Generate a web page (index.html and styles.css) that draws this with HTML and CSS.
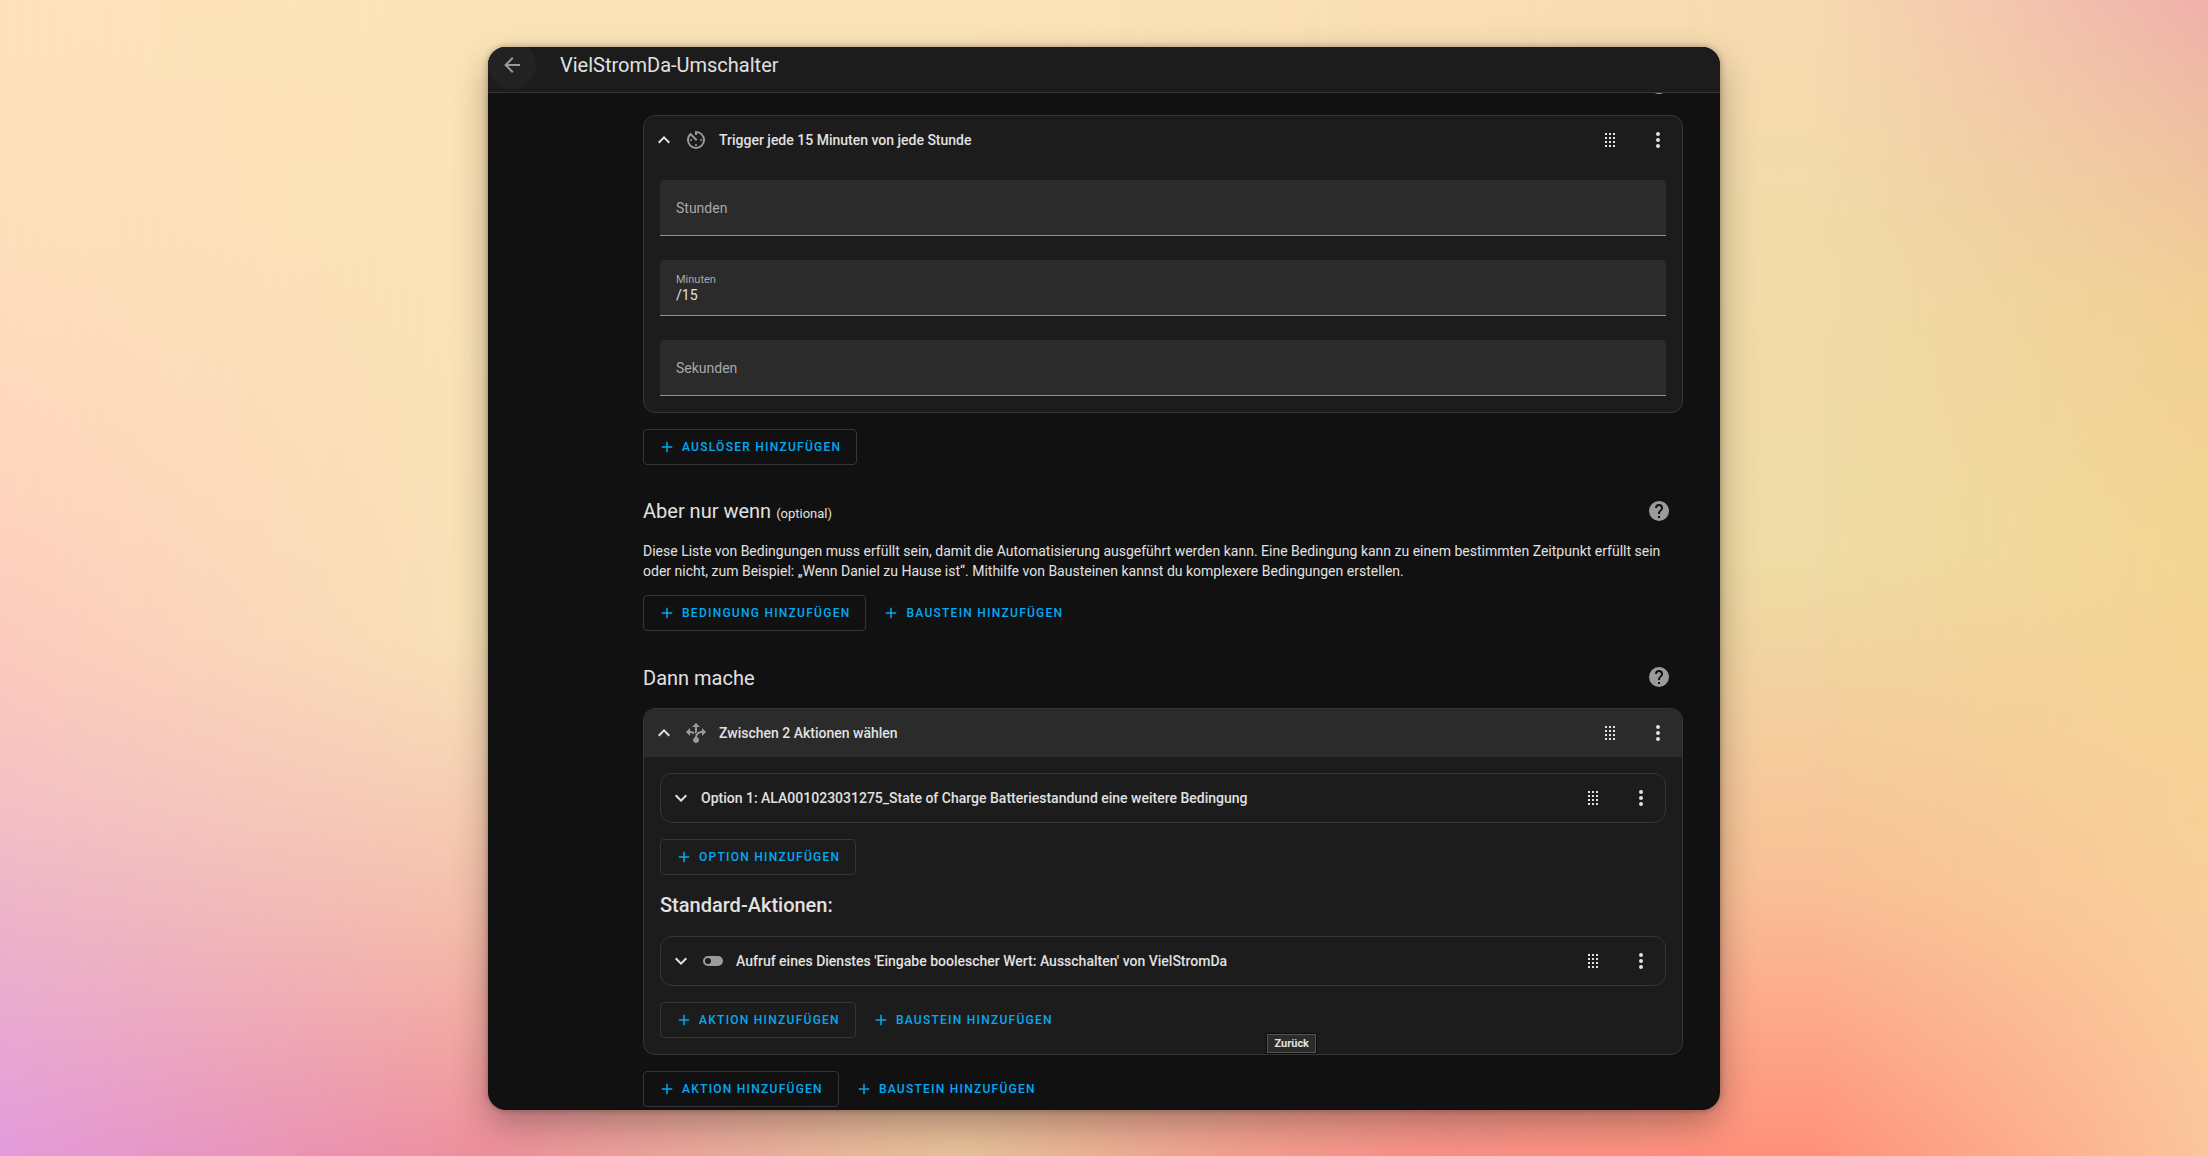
FILE: index.html
```html
<!DOCTYPE html>
<html lang="de">
<head>
<meta charset="utf-8">
<title>VielStromDa-Umschalter</title>
<link rel="stylesheet" href="styles.css">
</head>
<body>
<svg class="sprite" aria-hidden="true">
  <symbol id="i-back" viewBox="0 0 24 24"><path d="M20,11V13H8L13.5,18.5L12.08,19.92L4.16,12L12.08,4.08L13.5,5.5L8,11H20Z"/></symbol>
  <symbol id="i-plus" viewBox="0 0 24 24"><path d="M19,13H13V19H11V13H5V11H11V5H13V11H19V13Z"/></symbol>
  <symbol id="i-up" viewBox="0 0 24 24"><path d="M7.41,15.41L12,10.83L16.59,15.41L18,14L12,8L6,14L7.41,15.41Z"/></symbol>
  <symbol id="i-down" viewBox="0 0 24 24"><path d="M7.41,8.58L12,13.17L16.59,8.58L18,10L12,16L6,10L7.41,8.58Z"/></symbol>
  <symbol id="i-dots" viewBox="0 0 24 24"><path d="M12,16A2,2 0 0,1 14,18A2,2 0 0,1 12,20A2,2 0 0,1 10,18A2,2 0 0,1 12,16M12,10A2,2 0 0,1 14,12A2,2 0 0,1 12,14A2,2 0 0,1 10,12A2,2 0 0,1 12,10M12,4A2,2 0 0,1 14,6A2,2 0 0,1 12,8A2,2 0 0,1 10,6A2,2 0 0,1 12,4Z"/></symbol>
  <symbol id="i-drag" viewBox="0 0 24 24"><path d="M7,19V17H9V19H7M11,19V17H13V19H11M15,19V17H17V19H15M7,15V13H9V15H7M11,15V13H13V15H11M15,15V13H17V15H15M7,11V9H9V11H7M11,11V9H13V11H11M15,11V9H17V11H15M7,7V5H9V7H7M11,7V5H13V7H11M15,7V5H17V7H15Z"/></symbol>
  <symbol id="i-help" viewBox="0 0 24 24"><path d="M15.07,11.25L14.17,12.17C13.45,12.89 13,13.5 13,15H11V14.5C11,13.39 11.45,12.39 12.17,11.67L13.41,10.41C13.78,10.05 14,9.55 14,9C14,7.89 13.1,7 12,7A2,2 0 0,0 10,9H8A4,4 0 0,1 12,5A4,4 0 0,1 16,9C16,9.88 15.64,10.67 15.07,11.25M13,19H11V17H13M12,2A10,10 0 0,0 2,12A10,10 0 0,0 12,22A10,10 0 0,0 22,12C22,6.47 17.5,2 12,2Z"/></symbol>
  <symbol id="i-timer" viewBox="0 0 24 24"><path d="M11,17A1,1 0 0,0 12,18A1,1 0 0,0 13,17A1,1 0 0,0 12,16A1,1 0 0,0 11,17M11,3V7H13V5.08C16.39,5.57 19,8.47 19,12A7,7 0 0,1 12,19A7,7 0 0,1 5,12C5,10.32 5.59,8.78 6.58,7.58L12,13L13.41,11.59L6.61,4.79V4.81C4.42,6.45 3,9.05 3,12A9,9 0 0,0 12,21A9,9 0 0,0 21,12A9,9 0 0,0 12,3M18,12A1,1 0 0,0 17,11A1,1 0 0,0 16,12A1,1 0 0,0 17,13A1,1 0 0,0 18,12M6,12A1,1 0 0,0 7,13A1,1 0 0,0 8,12A1,1 0 0,0 7,11A1,1 0 0,0 6,12Z"/></symbol>
  <symbol id="i-decision" viewBox="0 0 24 24"><path d="M9.64,13.4C8.63,12.5 7.34,12.03 6,12V15L2,11L6,7V10C7.67,10 9.3,10.57 10.63,11.59C10.22,12.15 9.89,12.76 9.64,13.4M18,15V12C17.5,12 13.5,12.16 13.05,16.2C14.61,16.75 15.43,18.47 14.88,20.03C14.33,21.59 12.61,22.41 11.05,21.86C9.5,21.3 8.67,19.59 9.22,18.03C9.5,17.17 10.2,16.5 11.05,16.2C11.34,12.61 14.4,9.88 18,10V7L22,11L18,15M13,6V11.1C12.2,11.6 11.5,12.3 11,13V6H8L12,2L16,6H13Z"/></symbol>
  <symbol id="i-toggle" viewBox="0 0 24 24"><path d="M17,7H7A5,5 0 0,0 2,12A5,5 0 0,0 7,17H17A5,5 0 0,0 22,12A5,5 0 0,0 17,7M7,15A3,3 0 0,1 4,12A3,3 0 0,1 7,9A3,3 0 0,1 10,12A3,3 0 0,1 7,15Z"/></symbol>
</svg>

<div class="stage">
  <div class="wash wash-right"></div>
  <div class="wash wash-left-edge"></div>
  <div class="wash wash-right-edge"></div>
  <main class="window">
    <header class="toolbar">
      <button class="icon-btn back" type="button" aria-label="Zurück"><svg class="icon"><use href="#i-back"/></svg></button>
      <h1 class="toolbar-title">VielStromDa-Umschalter</h1>
    </header>

    <div class="viewport">
      <div class="content">
        <div class="section-head section-head-cut">
          <button class="icon-btn help" type="button" aria-label="Hilfe zu Auslösern"><svg class="icon"><use href="#i-help"/></svg></button>
        </div>

        <section class="card">
          <div class="row">
            <button class="toggle" type="button" aria-label="Einklappen"><svg class="icon"><use href="#i-up"/></svg></button>
            <svg class="icon kind"><use href="#i-timer"/></svg>
            <h3 class="row-title">Trigger jede 15 Minuten von jede Stunde</h3>
            <button class="icon-btn" type="button" aria-label="Verschieben"><svg class="icon"><use href="#i-drag"/></svg></button>
            <button class="icon-btn" type="button" aria-label="Menü"><svg class="icon"><use href="#i-dots"/></svg></button>
          </div>
          <form class="card-body fields">
            <div class="field"><label class="field-label" for="hours">Stunden</label><input class="field-input" id="hours" type="text"></div>
            <div class="field filled"><label class="field-label" for="minutes">Minuten</label><input class="field-input" id="minutes" type="text" value="/15"></div>
            <div class="field"><label class="field-label" for="seconds">Sekunden</label><input class="field-input" id="seconds" type="text"></div>
          </form>
        </section>
        <div class="actions">
          <button class="btn outlined" type="button"><svg class="icon small"><use href="#i-plus"/></svg>Auslöser hinzufügen</button>
        </div>

        <div class="section-head">
          <h2 class="section-title">Aber nur wenn <span class="optional">(optional)</span></h2>
          <button class="icon-btn help" type="button" aria-label="Hilfe zu Bedingungen"><svg class="icon"><use href="#i-help"/></svg></button>
        </div>
        <p class="description">Diese Liste von Bedingungen muss erfüllt sein, damit die Automatisierung ausgeführt werden kann. Eine Bedingung kann zu einem bestimmten Zeitpunkt erfüllt sein oder nicht, zum Beispiel: „Wenn Daniel zu Hause ist“. Mithilfe von Bausteinen kannst du komplexere Bedingungen erstellen.</p>
        <div class="actions">
          <button class="btn outlined" type="button"><svg class="icon small"><use href="#i-plus"/></svg>Bedingung hinzufügen</button>
          <button class="btn" type="button"><svg class="icon small"><use href="#i-plus"/></svg>Baustein hinzufügen</button>
        </div>

        <div class="section-head">
          <h2 class="section-title">Dann mache</h2>
          <button class="icon-btn help" type="button" aria-label="Hilfe zu Aktionen"><svg class="icon"><use href="#i-help"/></svg></button>
        </div>
        <section class="card">
          <div class="row active">
            <button class="toggle" type="button" aria-label="Einklappen"><svg class="icon"><use href="#i-up"/></svg></button>
            <svg class="icon kind"><use href="#i-decision"/></svg>
            <h3 class="row-title">Zwischen 2 Aktionen wählen</h3>
            <button class="icon-btn" type="button" aria-label="Verschieben"><svg class="icon"><use href="#i-drag"/></svg></button>
            <button class="icon-btn" type="button" aria-label="Menü"><svg class="icon"><use href="#i-dots"/></svg></button>
          </div>
          <div class="card-body">
            <div class="card">
              <div class="row">
                <button class="toggle" type="button" aria-label="Ausklappen"><svg class="icon"><use href="#i-down"/></svg></button>
                <h3 class="row-title">Option 1: ALA001023031275_State of Charge Batteriestandund eine weitere Bedingung</h3>
                <button class="icon-btn" type="button" aria-label="Verschieben"><svg class="icon"><use href="#i-drag"/></svg></button>
                <button class="icon-btn" type="button" aria-label="Menü"><svg class="icon"><use href="#i-dots"/></svg></button>
              </div>
            </div>
            <div class="actions">
              <button class="btn outlined" type="button"><svg class="icon small"><use href="#i-plus"/></svg>Option hinzufügen</button>
            </div>
            <h2 class="default-title">Standard-Aktionen:</h2>
            <div class="card">
              <div class="row">
                <button class="toggle" type="button" aria-label="Ausklappen"><svg class="icon"><use href="#i-down"/></svg></button>
                <svg class="icon kind"><use href="#i-toggle"/></svg>
                <h3 class="row-title">Aufruf eines Dienstes 'Eingabe boolescher Wert: Ausschalten' von VielStromDa</h3>
                <button class="icon-btn" type="button" aria-label="Verschieben"><svg class="icon"><use href="#i-drag"/></svg></button>
                <button class="icon-btn" type="button" aria-label="Menü"><svg class="icon"><use href="#i-dots"/></svg></button>
              </div>
            </div>
            <div class="actions">
              <button class="btn outlined" type="button"><svg class="icon small"><use href="#i-plus"/></svg>Aktion hinzufügen</button>
              <button class="btn" type="button"><svg class="icon small"><use href="#i-plus"/></svg>Baustein hinzufügen</button>
            </div>
          </div>
          <div class="tooltip" role="tooltip">Zurück</div>
        </section>
        <div class="actions">
          <button class="btn outlined" type="button"><svg class="icon small"><use href="#i-plus"/></svg>Aktion hinzufügen</button>
          <button class="btn" type="button"><svg class="icon small"><use href="#i-plus"/></svg>Baustein hinzufügen</button>
        </div>
      </div>
    </div>
  </main>
</div>
</body>
</html>
```
FILE: styles.css
```css
:root {
  --text: #e1e1e1;
  --muted: #9b9b9b;
  --surface: #1c1c1c;
  --page: #111111;
  --raised: #2b2b2b;
  --line: #363636;
  --accent: #03a9f4;
}

* { box-sizing: border-box; }

body {
  margin: 0;
  font-family: Roboto, "Liberation Sans", sans-serif;
  font-size: 14px;
  line-height: 20px;
  color: var(--text);
}

h1, h2, h3, p { margin: 0; font-weight: 400; }

button { font: inherit; color: inherit; background: none; border: 0; padding: 0; cursor: pointer; }

.sprite { display: none; }

/* Wallpaper: vertical colour ramps that blend into each other sideways */
.stage {
  position: relative;
  min-height: 100vh;
  padding: 47px 24px 46px;
  background:
    radial-gradient(ellipse 22% 30% at 44% 104%, #e6c898 0%, #e6c89800 100%),
    linear-gradient(180deg, #fde4b8 0%, #f9e2b6 55%, #f8d4b4 66%, #f6bda9 80%, #f3a6a0 90%, #ee8f9b 100%);
}

.wash { position: absolute; inset: 0; }

.wash-right {
  background: linear-gradient(180deg, #f8dab1 0%, #f2dba9 18%, #efdca5 48%, #f4cf9e 62%, #f9bf95 77%, #fda88a 88%, #ff907b 100%);
  mask-image: linear-gradient(90deg, transparent 44%, #000 78%);
}

.wash-left-edge {
  background: linear-gradient(180deg, #ffe2bb 0%, #fedfbb 20%, #fed3bd 44%, #fbc9bd 58%, #f3bfc5 70%, #ebb0cb 82%, #e39bdc 100%);
  mask-image: linear-gradient(90deg, #000, transparent 22%);
}

.wash-right-edge {
  background: linear-gradient(180deg, #efb0ab 0%, #efc0a0 12%, #f1cf95 26%, #f3d592 46%, #f6d296 64%, #f9ce9b 80%, #fbc59c 100%);
  mask-image: linear-gradient(270deg, #000, transparent 18%);
}

.window {
  position: relative;
  max-width: 1232px;
  margin: 0 auto;
  border-radius: 18px;
  overflow: hidden;
  background: var(--page);
  box-shadow: 0 14px 36px rgba(0, 0, 0, .3), 0 0 6px rgba(0, 0, 0, .3);
}

.toolbar {
  display: flex;
  align-items: center;
  gap: 24px;
  height: 46px;
  padding-bottom: 9px;
  background: var(--surface);
  border-bottom: 1px solid var(--line);
}

.toolbar-title { font-size: 20px; line-height: 24px; }

.icon { display: block; flex: none; width: 24px; height: 24px; fill: currentColor; }
.icon.small { width: 18px; height: 18px; }

.icon-btn {
  display: grid;
  place-items: center;
  flex: none;
  width: 48px;
  height: 48px;
  border-radius: 50%;
}

.back { background: #222222; color: var(--muted); }
.help { color: var(--muted); }

.viewport { overflow: hidden; padding: 0 37px 3px; }
.content { max-width: 1040px; margin-left: auto; }

.section-head {
  display: flex;
  align-items: center;
  justify-content: space-between;
  margin: 22px 0 7px;
}

.section-head-cut { justify-content: flex-end; margin-top: -33px; }

.section-title { font-size: 20px; line-height: 24px; padding-top: 2px; }
.optional { font-size: 13px; }

.description { margin: -1px 0 -2px; }

.card {
  position: relative;
  background: var(--surface);
  border: 1px solid var(--line);
  border-radius: 12px;
}

.row { display: flex; align-items: center; height: 48px; padding-left: 8px; }
.row.active { background: var(--raised); border-radius: 11px 11px 0 0; }
.toggle { margin-right: 8px; }
.kind { margin-right: 11px; color: var(--muted); }
.row-title { flex: 1; font-size: 14px; font-weight: 500; }

.card-body { padding: 16px; }
.fields { display: grid; gap: 24px; }

.field {
  display: flex;
  flex-direction: column;
  justify-content: center;
  position: relative;
  height: 56px;
  padding: 0 16px;
  background: var(--raised);
  border-bottom: 1px solid #8f8f8f;
  border-radius: 4px 4px 0 0;
}

.field-label { color: #a8a8a8; }

.field-input {
  position: absolute;
  inset: 0;
  width: 100%;
  padding: 0 16px;
  border: 0;
  background: none;
  color: var(--text);
  font: inherit;
}

.field.filled .field-label { font-size: 11px; line-height: 15px; }
.field.filled .field-input { position: static; padding: 0; height: 16px; }

.actions { display: flex; gap: 8px; margin-top: 16px; }

.btn {
  display: flex;
  align-items: center;
  gap: 6px;
  height: 36px;
  padding: 0 8px;
  border-radius: 4px;
  color: var(--accent);
  font-size: 12px;
  font-weight: 500;
  letter-spacing: 0.105em;
  text-transform: uppercase;
}

.btn.outlined { padding: 0 15px 0 14px; border: 1px solid var(--line); }

.default-title { margin: 18px 0 19px; font-size: 20px; line-height: 24px; font-weight: 500; }

.tooltip {
  position: absolute;
  right: 366px;
  bottom: 1px;
  padding: 0 6px;
  border: 1px solid #555555;
  outline: 1px solid #0c0c0c;
  background: var(--raised);
  font-size: 11px;
  line-height: 17px;
  font-weight: 700;
}
```
